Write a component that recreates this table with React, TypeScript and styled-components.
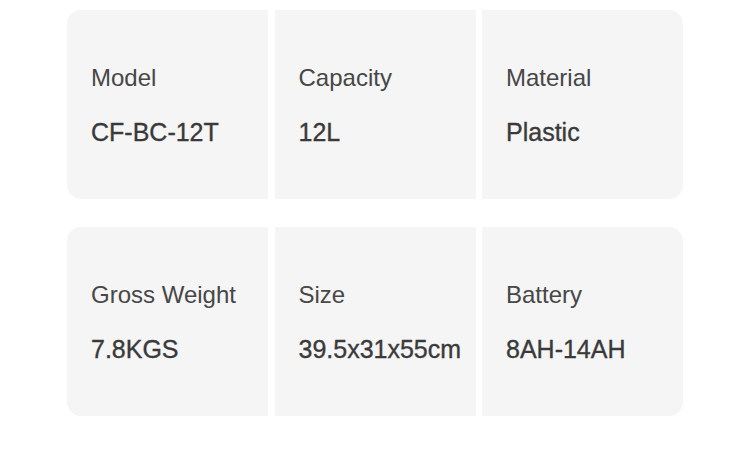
import styled, { createGlobalStyle } from "styled-components";

const GlobalStyle = createGlobalStyle`
  html, body {
    margin: 0;
    padding: 0;
    background: #ffffff;
  }
  body {
    font-family: "Liberation Sans", Arial, sans-serif;
  }
`;

const specRows = [
  [
    { label: "Model", value: "CF-BC-12T" },
    { label: "Capacity", value: "12L" },
    { label: "Material", value: "Plastic" },
  ],
  [
    { label: "Gross Weight", value: "7.8KGS" },
    { label: "Size", value: "39.5x31x55cm" },
    { label: "Battery", value: "8AH-14AH" },
  ],
];

const App = () => {
  return (
    <>
      <GlobalStyle />
      <Page>
        {specRows.map((row, i) => (
          <SpecRow key={i}>
            {row.map((item) => (
              <SpecCell key={item.label}>
                <SpecLabel>{item.label}</SpecLabel>
                <SpecValue>{item.value}</SpecValue>
              </SpecCell>
            ))}
          </SpecRow>
        ))}
      </Page>
    </>
  );
};

export default App;

const Page = styled.div`
  width: 750px;
  height: 457px;
  box-sizing: border-box;
  padding: 10px 67px 0 67px;
  display: flex;
  flex-direction: column;
  gap: 28px;
`;

const SpecRow = styled.div`
  display: grid;
  grid-template-columns: 201px 201px 201px;
  column-gap: 6.5px;
  height: 189px;
  border-radius: 14px;
  overflow: hidden;
`;

const SpecCell = styled.div`
  background: #f5f5f5;
  display: flex;
  flex-direction: column;
  justify-content: center;
  padding: 1px 0 0 24px;
  gap: 26px;
`;

const SpecLabel = styled.div`
  font-size: 24px;
  line-height: 28px;
  font-weight: 400;
  color: #474747;
  white-space: nowrap;
`;

const SpecValue = styled.div`
  font-size: 25px;
  line-height: 28px;
  font-weight: 400;
  color: #3a3a3a;
  -webkit-text-stroke: 0.35px #3a3a3a;
  white-space: nowrap;
`;
